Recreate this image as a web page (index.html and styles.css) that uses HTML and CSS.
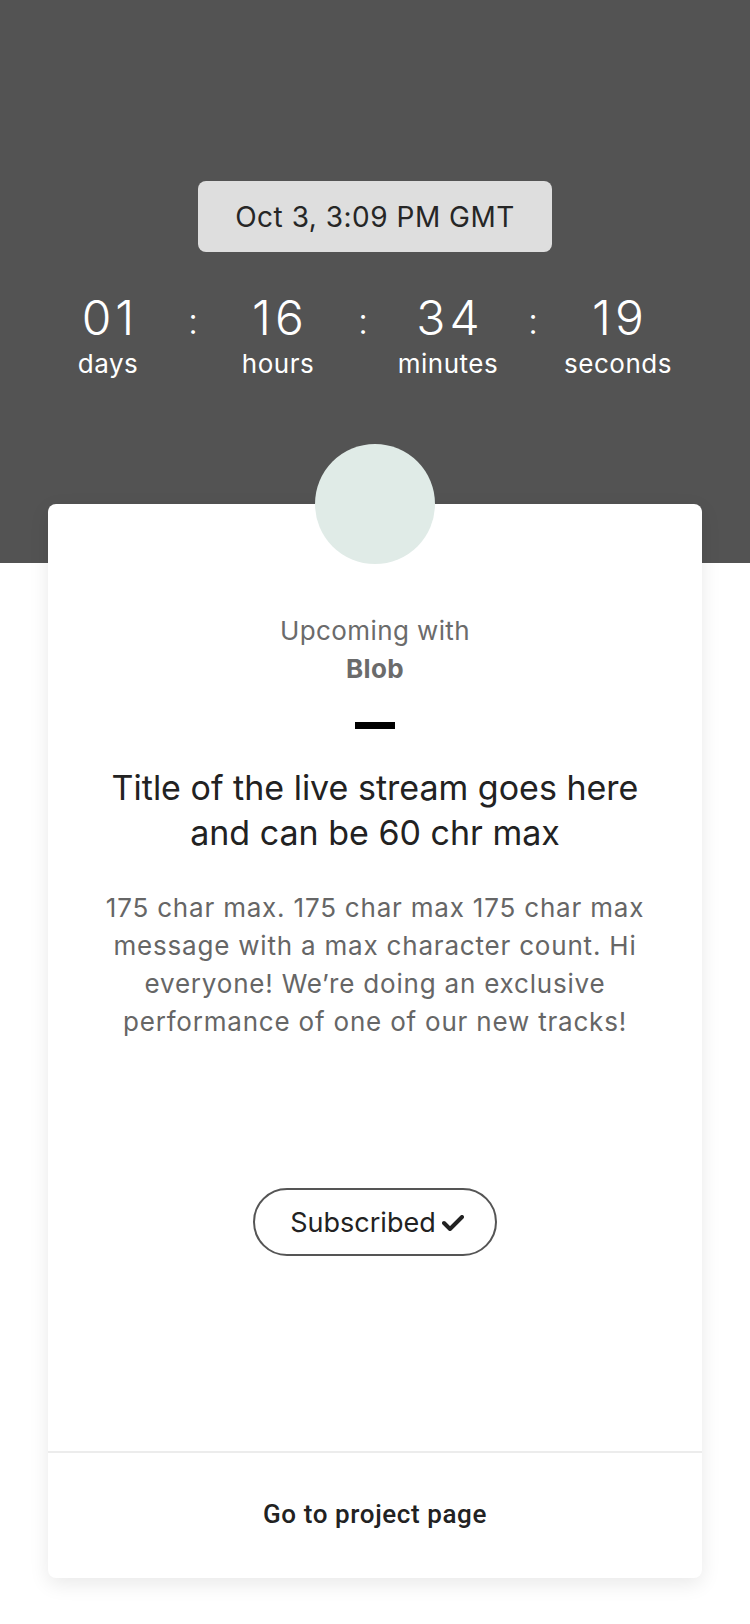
FILE: index.html
```html
<!DOCTYPE html>
<html lang="en">
<head>
<meta charset="utf-8">
<title>Upcoming live stream</title>
<link rel="stylesheet" href="styles.css">
</head>
<body>
<header class="hero">
  <div class="date-pill">Oct 3, 3:09 PM GMT</div>
  <div class="countdown">
    <div class="unit"><span class="num">01</span><span class="lbl">days</span></div>
    <div class="colon">:</div>
    <div class="unit"><span class="num">16</span><span class="lbl">hours</span></div>
    <div class="colon">:</div>
    <div class="unit"><span class="num">34</span><span class="lbl">minutes</span></div>
    <div class="colon">:</div>
    <div class="unit"><span class="num">19</span><span class="lbl">seconds</span></div>
  </div>
</header>
<main class="card">
  <div class="avatar"></div>
  <section class="card-body">
    <p class="upcoming">Upcoming with</p>
    <p class="artist">Blob</p>
    <div class="dash"></div>
    <h1 class="title">Title of the live stream goes here and can be 60 chr max</h1>
    <p class="desc">175 char max. 175 char max 175 char max message with a max character count. Hi everyone! We’re doing an exclusive performance of one of our new tracks!</p>
    <button class="subscribed">Subscribed
      <svg class="check" viewBox="0 0 22 16" width="22" height="16" aria-hidden="true"><polyline points="2,8 8,14 20,2" fill="none" stroke="#222" stroke-width="4" stroke-linecap="round" stroke-linejoin="round"/></svg>
    </button>
  </section>
  <footer class="card-footer">Go to project page</footer>
</main>
</body>
</html>
```
FILE: styles.css
```css
* { box-sizing: border-box; }
html, body { margin: 0; padding: 0; }
body {
  background: #ffffff;
  font-family: Inter, "Noto Sans", "Liberation Sans", sans-serif;
  width: 750px;
}
.hero {
  background: #535353;
  height: 563px;
  padding-top: 181px;
  display: flex;
  flex-direction: column;
  align-items: center;
}
.date-pill {
  width: 354px;
  height: 71px;
  background: #dedede;
  border-radius: 8px;
  display: flex;
  align-items: center;
  justify-content: center;
  font-size: 28px;
  color: #262626;
  letter-spacing: 0.5px;
}
.countdown {
  margin-top: 38px;
  display: flex;
  align-items: flex-start;
  padding-right: 24px;
  width: 750px;
  justify-content: center;
}
.unit {
  width: 130px;
  display: flex;
  flex-direction: column;
  align-items: center;
  color: #ffffff;
}
.num {
  font-size: 48px;
  font-weight: 300;
  line-height: 56px;
  letter-spacing: 4px;
  margin-right: -4px;
}
.lbl {
  font-size: 26px;
  line-height: 30px;
  margin-top: 3px;
  font-weight: 400;
  letter-spacing: 0.5px;
}
.colon {
  width: 40px;
  text-align: center;
  color: #ffffff;
  font-size: 36px;
  font-weight: 300;
  line-height: 56px;
  padding-top: 3px;
}
.card {
  position: relative;
  width: 654px;
  margin: -59px auto 46px;
  background: #ffffff;
  border-radius: 8px;
  box-shadow: 0 6px 20px rgba(0, 0, 0, 0.09);
}
.avatar {
  position: absolute;
  top: -60px;
  left: 50%;
  margin-left: -60px;
  width: 120px;
  height: 120px;
  border-radius: 50%;
  background: #e0ebe7;
}
.card-body {
  padding: 108px 30px 195px;
  display: flex;
  flex-direction: column;
  align-items: center;
  text-align: center;
  border-bottom: 2px solid #ececec;
}
.upcoming {
  margin: 0;
  font-size: 26px;
  line-height: 38px;
  color: #6b6b6b;
  letter-spacing: 0.4px;
}
.artist {
  margin: 0;
  font-size: 26px;
  line-height: 38px;
  font-weight: 700;
  color: #6b6b6b;
  letter-spacing: 0.4px;
}
.dash {
  margin-top: 34px;
  width: 40px;
  height: 7px;
  background: #000000;
}
.title {
  margin: 36px 0 0;
  font-size: 34px;
  line-height: 45px;
  font-weight: 400;
  color: #222222;
  max-width: 580px;
}
.desc {
  margin: 34px 0 0;
  font-size: 26px;
  line-height: 38px;
  color: #666666;
  max-width: 580px;
  letter-spacing: 0.8px;
}
.subscribed {
  margin-top: 147px;
  width: 244px;
  height: 68px;
  border: 2px solid #555555;
  border-radius: 34px;
  background: #ffffff;
  font-family: Inter, "Noto Sans", "Liberation Sans", sans-serif;
  font-size: 27px;
  color: #222222;
  display: flex;
  align-items: center;
  justify-content: center;
  gap: 6px;
  padding: 0 0 0 4px;
}
.check { display: block; margin-top: 1px; }
.card-footer {
  height: 125px;
  display: flex;
  align-items: center;
  justify-content: center;
  padding-bottom: 4px;
  font-family: Roboto, "Liberation Sans", sans-serif;
  font-weight: 500;
  font-size: 26px;
  letter-spacing: 0.6px;
  color: #222222;
}
```
